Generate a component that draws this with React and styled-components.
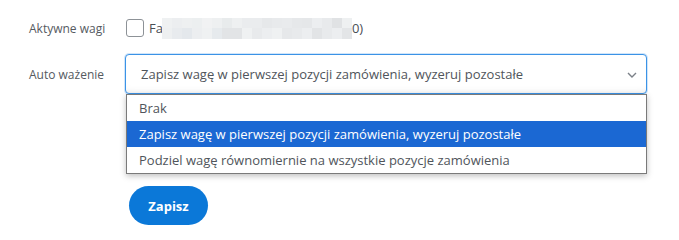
import React from "react";
import styled, { createGlobalStyle } from "styled-components";

const GlobalStyle = createGlobalStyle`
  html, body {
    margin: 0;
    padding: 0;
    background: #ffffff;
  }
  body {
    font-family: "Open Sans", "Liberation Sans", sans-serif;
    -webkit-font-smoothing: antialiased;
  }
`;

const options = [
  "Brak",
  "Zapisz wagę w pierwszej pozycji zamówienia, wyzeruj pozostałe",
  "Podziel wagę równomiernie na wszystkie pozycje zamówienia",
];

// blurred (pixelated) part of the checkbox label
const mosaic = [
  ["#eff1f2", "#eceef0", "#eef0f1", "#eceff0", "#f1f2f3", "#eef0f1", "#e8ebec", "#eef0f1", "#eaecee", "#eaecee", "#e6e8ea", "#e8eaec", "#e9ebed", "#e6e8ea", "#e5e7e9", "#eceef0", "#e8eaec", "#e0e2e4", "#eef0f1"],
  ["#eef0f1", "#e8ebee", "#e4e8ec", "#eceef0", "#eff1f2", "#e6eaed", "#e2e4e6", "#e2e4e6", "#eff1f2", "#e8eaec", "#eceef0", "#eff1f2", "#e6e8ea", "#e8eaec", "#eceef0", "#e2e4e6", "#e8eaec", "#eceef0", "#e3e5e7"],
];

export default function App() {
  return (
    <>
      <GlobalStyle />
      <Form>
        <Row>
          <Label>Aktywne wagi</Label>
          <CheckRow>
            <Checkbox />
            <CheckText>Fa</CheckText>
            <Mosaic>
              {mosaic.map((row, r) =>
                row.map((c, i) => <Cell key={`${r}-${i}`} $color={c} />)
              )}
            </Mosaic>
            <CheckText>0)</CheckText>
          </CheckRow>
        </Row>
        <Row $top={15}>
          <Label>Auto ważenie</Label>
          <SelectWrap>
            <Select>
              <span>{options[1]}</span>
              <Chevron viewBox="0 0 10 6" width="10" height="6">
                <path d="M1 1l4 4 4-4" fill="none" stroke="#7b8188" strokeWidth="1.4" />
              </Chevron>
            </Select>
            <Menu>
              {options.map((o, i) => (
                <Option key={o} $selected={i === 1} $height={i === 0 ? 26 : 26}>
                  {o}
                </Option>
              ))}
            </Menu>
          </SelectWrap>
        </Row>
        <Actions>
          <Button>Zapisz</Button>
        </Actions>
      </Form>
    </>
  );
}

const Form = styled.div`
  padding: 17px 0 0 29px;
  width: 618px;
`;

const Row = styled.div`
  display: grid;
  grid-template-columns: 96px 1fr;
  align-items: center;
  margin-top: ${(p) => p.$top || 0}px;
`;

const Label = styled.div`
  font-size: 12px;
  color: #555a5f;
`;

const CheckRow = styled.div`
  display: flex;
  align-items: center;
  height: 22px;
`;

const Checkbox = styled.span`
  box-sizing: border-box;
  width: 18px;
  height: 18px;
  border: 1px solid #8d9297;
  border-radius: 3px;
  margin: 0 5px 0 1px;
  background: #fff;
`;

const CheckText = styled.span`
  font-size: 13px;
  color: #4a4f55;
`;

const Mosaic = styled.div`
  display: grid;
  grid-template-columns: repeat(19, 10px);
  grid-auto-rows: 10.5px;
  width: 190px;
  margin-left: -1px;
`;

const Cell = styled.span`
  background: ${(p) => p.$color};
`;

const SelectWrap = styled.div`
  position: relative;
`;

const Select = styled.div`
  box-sizing: border-box;
  height: 40px;
  width: 522px;
  display: flex;
  align-items: center;
  justify-content: space-between;
  padding: 0 9px 0 15px;
  border: 1px solid #3b93e6;
  border-radius: 4px;
  box-shadow: 0 0 0 1px rgba(120, 180, 240, 0.35), inset 0 -6px 8px -6px rgba(0, 0, 0, 0.08);
  background: #fff;
  font-size: 13px;
  color: #50555b;
`;

const Chevron = styled.svg`
  margin-top: 1px;
`;

const Menu = styled.div`
  position: absolute;
  top: 40px;
  left: 1px;
  width: 521px;
  box-sizing: border-box;
  border: 1px solid #7a7a7a;
  background: #fff;
  box-shadow: 0 2px 6px rgba(0, 0, 0, 0.25);
`;

const Option = styled.div`
  height: ${(p) => p.$height}px;
  padding: 0 12px;
  display: flex;
  align-items: center;
  font-size: 13px;
  color: ${(p) => (p.$selected ? "#ffffff" : "#50555b")};
  background: ${(p) => (p.$selected ? "#1b68d3" : "transparent")};
`;

const Actions = styled.div`
  margin: 92px 0 0 100px;
`;

const Button = styled.button`
  width: 79px;
  height: 39px;
  border: none;
  border-radius: 20px;
  background: #0b78d8;
  color: #ffffff;
  font-family: "Open Sans", "Liberation Sans", sans-serif;
  font-weight: 700;
  font-size: 13px;
  cursor: pointer;
`;
